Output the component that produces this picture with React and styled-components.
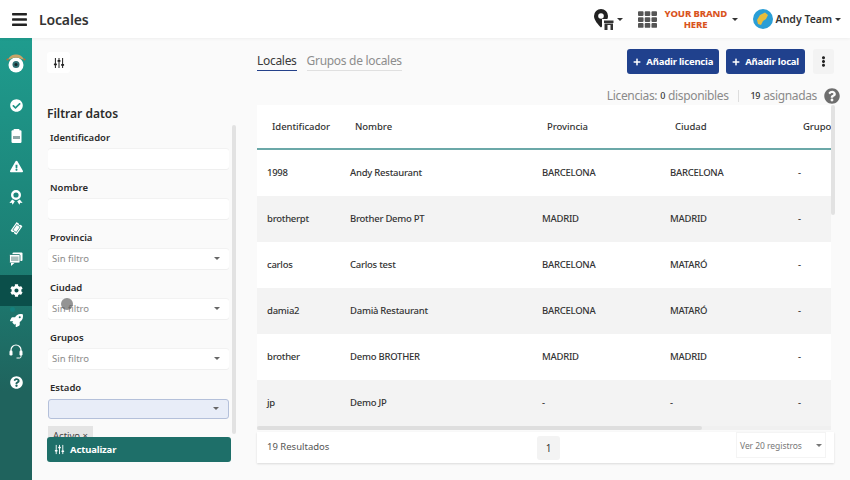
import React from "react"
import styled, { createGlobalStyle } from "styled-components"
import {
  FaBars,
  FaCheckCircle,
  FaExclamationTriangle,
  FaTicketAlt,
  FaCog,
  FaRocket,
  FaQuestionCircle,
  FaPlus,
  FaEllipsisV,
  FaTh,
} from "react-icons/fa"

const GlobalStyle = createGlobalStyle`
  html, body {
    margin: 0;
    padding: 0;
    background: #fafafa;
    font-family: "Noto Sans", "Open Sans", sans-serif;
    color: #333;
  }
  * { box-sizing: border-box; }
`

const Page = styled.div`
  position: relative;
  width: 850px;
  height: 480px;
  overflow: hidden;
  display: flex;
  flex-direction: column;
`

const Header = styled.header`
  height: 38px;
  flex: none;
  background: #fff;
  box-shadow: 0 1px 3px rgba(0, 0, 0, 0.05);
  display: flex;
  align-items: center;
  justify-content: space-between;
  padding: 0 9px 0 11px;
  z-index: 2;
`

const HeaderLeft = styled.div`
  display: flex;
  align-items: center;
  gap: 11px;
  color: #222;
  font-size: 17px;
`

const Title = styled.h1`
  margin: 0;
  font-size: 14px;
  font-weight: 600;
  letter-spacing: -0.15px;
  color: #333;
`

const HeaderRight = styled.div`
  display: flex;
  align-items: center;
`

const Caret = styled.span`
  display: inline-block;
  width: 0;
  height: 0;
  border-left: 3px solid transparent;
  border-right: 3px solid transparent;
  border-top: 3px solid ${({ color }) => color || "#333"};
`

const PinCaret = styled(Caret)`
  margin: 0 15px 0 3px;
`

const BrandCaret = styled(Caret)`
  margin-right: 15px;
`

const Brand = styled.div`
  width: 62px;
  margin: 0 5px 0 8px;
  text-align: center;
  font-size: 9.5px;
  line-height: 11px;
  font-weight: 800;
  letter-spacing: -0.1px;
  white-space: nowrap;
  color: #d9541e;
`

const UserName = styled.span`
  margin: 0 3px 0 3px;
  font-size: 10.5px;
  font-weight: 600;
  color: #333;
`

const Body = styled.div`
  flex: 1;
  min-height: 0;
  display: grid;
  grid-template-columns: 32px 213px 1fr;
`

const Sidebar = styled.nav`
  background: linear-gradient(#1f9c8e 0, #1c7f74 50%, #1f635d 80%);
  padding-top: 10px;
  display: flex;
  flex-direction: column;
`

const LogoSlot = styled.div`
  height: 30px;
  margin-bottom: 12px;
  display: flex;
  align-items: center;
  justify-content: center;
`

const NavItem = styled.div`
  position: relative;
  height: 30.8px;
  display: flex;
  align-items: center;
  justify-content: center;
  color: #fff;
  font-size: 13px;
  background: ${({ $active }) => ($active ? "#0b4f4a" : "transparent")};
`

const NavDot = styled.span`
  position: absolute;
  left: 10px;
  top: 1px;
  width: 5px;
  height: 5px;
  border-radius: 50%;
  background: #14807c;
`

const TicketGlyph = styled(FaTicketAlt)`
  font-size: 11px;
  transform: rotate(-55deg);
`

const FilterPanel = styled.aside`
  padding: 14px 9px 18px 15px;
  display: flex;
  flex-direction: column;
  min-height: 0;
`

const TuneButton = styled.div`
  width: 23px;
  height: 21px;
  background: #fff;
  border-radius: 3px;
  display: flex;
  align-items: center;
  justify-content: center;
  color: #222;
`

const FilterTitle = styled.h2`
  margin: 32px 0 0;
  font-size: 12px;
  line-height: 18px;
  font-weight: 600;
  color: #2b2b2b;
`

const FilterScroll = styled.div`
  flex: 1;
  min-height: 0;
  margin-top: 2px;
  display: flex;
  gap: 1px;
`

const FilterList = styled.div`
  flex: 1;
  min-width: 0;
  overflow: hidden;
  padding: 5.500px 2px 0 1px;
`

const ScrollTrack = styled.div`
  width: 4px;
  height: 309px;
  background: #e2e2e2;
  border-radius: 2px;
  flex: none;
`

const Field = styled.div`
  margin-bottom: 12px;
`

const FieldLabel = styled.label`
  display: block;
  height: 14px;
  margin: 0 0 4px 2px;
  font-size: 9.5px;
  line-height: 14px;
  font-weight: 600;
  color: #2b2b2b;
`

const Control = styled.div`
  height: 20px;
  padding: 0 9px 1px 4px;
  display: flex;
  align-items: center;
  justify-content: space-between;
  border-radius: 3px;
  font-size: 9.5px;
  color: #8b8b8b;
  background: ${({ $focused }) => ($focused ? "#e8edf8" : "#fff")};
  border: ${({ $focused }) => ($focused ? "1px solid #b4c0da" : "0")};
  box-shadow: ${({ $focused }) => ($focused ? "none" : "0 1px 0 #efefef, 0 -1px 0 #f2f2f2")};
`

const Chip = styled.span`
  display: block;
  width: fit-content;
  height: 20px;
  margin-top: -5px;
  padding: 3px 5px 0 5px;
  background: #e4e4e4;
  font-size: 9.5px;
  line-height: 14px;
  color: #444;
`

const UpdateButton = styled.button`
  flex: none;
  width: 184px;
  height: 25px;
  padding: 0 7px;
  display: flex;
  align-items: center;
  gap: 5px;
  border: 0;
  border-radius: 3px;
  background: #1e6f69;
  color: #fff;
  font-family: inherit;
  font-size: 9.5px;
  font-weight: 700;
  letter-spacing: -0.15px;
`

const Main = styled.main`
  padding: 11px 10px 0 12px;
  display: flex;
  flex-direction: column;
  min-width: 0;
`

const Toolbar = styled.div`
  height: 25px;
  margin-right: 6px;
  display: flex;
  align-items: center;
  justify-content: space-between;
`

const Tabs = styled.div`
  display: flex;
  gap: 10px;
`

const Tab = styled.span`
  padding-bottom: 1px;
  font-size: 12px;
  line-height: 17px;
  letter-spacing: -0.3px;
  color: ${({ $active }) => ($active ? "#3a3a3a" : "#8d8d8d")};
  border-bottom: 1px solid ${({ $active }) => ($active ? "#24418a" : "#e0e0e0")};
`

const Actions = styled.div`
  display: flex;
  align-items: center;
`

const PrimaryButton = styled.button`
  height: 25px;
  margin-right: 7px;
  padding: 0 6px;
  display: flex;
  align-items: center;
  gap: 5px;
  border: 0;
  border-radius: 3px;
  background: #20418d;
  color: #fff;
  font-family: inherit;
  font-size: 9.5px;
  font-weight: 700;
  letter-spacing: -0.2px;
  white-space: nowrap;
`

const MoreButton = styled.button`
  width: 21px;
  height: 25px;
  margin-left: 1px;
  padding: 0;
  display: flex;
  align-items: center;
  justify-content: center;
  border: 0;
  border-radius: 3px;
  background: #f3f3f3;
  color: #222;
  font-size: 11px;
`

const LicenseRow = styled.div`
  height: 31px;
  padding-top: 12px;
  display: flex;
  align-items: center;
  justify-content: flex-end;
  font-size: 12px;
  letter-spacing: -0.35px;
  color: #8a8a8a;
  white-space: nowrap;
`

const LicenseCount = styled.b`
  color: #333;
  font-size: 9px;
  font-weight: 500;
  margin: 0 3px;
`

const LicenseDivider = styled.span`
  width: 1px;
  height: 12px;
  margin: 0 9px;
  background: #ddd;
`

const HelpIcon = styled.span`
  display: flex;
  margin-left: 7px;
  color: #6e6e6e;
  font-size: 16px;
`

const TableArea = styled.div`
  height: 326px;
  margin-right: 5px;
  display: flex;
`

const TableViewport = styled.div`
  width: 574px;
  display: flex;
  flex-direction: column;
  overflow: hidden;
`

const Row = styled.div`
  flex: none;
  height: ${({ $head }) => ($head ? "45px" : "46px")};
  display: grid;
  grid-template-columns: 83px 192px 128px 128px 46px;
  align-items: center;
  white-space: nowrap;
  background: ${({ $shaded }) => ($shaded ? "#f3f3f3" : "#fff")};
  border-bottom: ${({ $head }) => ($head ? "2px solid #6ba8a8" : "0")};
`

const HeadCell = styled.div`
  padding-left: 15px;
  font-size: 9.5px;
  font-weight: 500;
  letter-spacing: -0.05px;
  color: #333;
  overflow: hidden;
`

const Cell = styled.div`
  padding: 0 0 2px 10px;
  font-size: 9.5px;
  font-weight: 500;
  letter-spacing: -0.25px;
  color: #333;
`

const HScroll = styled.div`
  flex: none;
  height: 4px;
  background: #f0f0f0;
`

const HThumb = styled.div`
  width: 445px;
  height: 4px;
  border-radius: 2px;
  background: #dedede;
`

const VScroll = styled.div`
  width: 4px;
  height: 110px;
  background: #e2e2e2;
  border-radius: 2px;
`

const TableFooter = styled.footer`
  width: 577px;
  height: 31px;
  margin-top: 1px;
  display: grid;
  grid-template-columns: 280px 1fr auto;
  align-items: center;
  background: #fff;
  box-shadow: 0 1px 2px rgba(0, 0, 0, 0.13);
`

const ResultCount = styled.span`
  padding: 0 0 2px 10px;
  font-size: 9.5px;
  color: #555;
`

const PageNumber = styled.span`
  width: 23px;
  height: 24px;
  display: flex;
  align-items: center;
  justify-content: center;
  background: #f3f3f3;
  border-radius: 3px;
  font-size: 10px;
  color: #333;
`

const PageSize = styled.div`
  width: 90px;
  height: 26px;
  margin: 0 8px 5px 0;
  padding: 0 3px 0 3px;
  display: flex;
  align-items: center;
  justify-content: space-between;
  border: 1px solid #f4f4f4;
  font-size: 8.5px;
  letter-spacing: -0.05px;
  color: #777;
`

const ClickMark = styled.span`
  position: absolute;
  left: 61px;
  top: 298px;
  width: 12px;
  height: 12px;
  border-radius: 50%;
  background: rgba(90, 90, 90, 0.65);
`

const TuneIcon = ({ size = 12 }) => (
  <svg width={size} height={size} viewBox="0 0 24 24" fill="currentColor">
    <rect x="3.800" y="2" width="2" height="20" />
    <rect x="11" y="2" width="2" height="20" />
    <rect x="18.200" y="2" width="2" height="20" />
    <rect x="1.800" y="13" width="6" height="3.500" rx="1" />
    <rect x="9" y="6" width="6" height="3.500" rx="1" />
    <rect x="16.200" y="14" width="6" height="3.500" rx="1" />
  </svg>
)

const EyeLogo = () => (
  <svg width="20" height="20" viewBox="0 0 20 20">
    <circle cx="10" cy="12" r="7.500" fill="#fff" />
    <circle cx="10" cy="11.500" r="3.500" fill="#2f6f73" />
    <circle cx="10" cy="11.500" r="1.500" fill="#16262a" />
    <path d="M2 6.500 C4 2.500 7 1.500 10 1.500 C13 1.500 16 2.500 18 6.500 L15.500 6 C13 4.200 7 4.200 4.500 6 Z" fill="#c9a468" />
    <circle cx="1.500" cy="6.500" r="1" fill="#c8642c" />
    <circle cx="18.500" cy="6.500" r="1" fill="#c8642c" />
  </svg>
)

const ClipboardIcon = () => (
  <svg width="11" height="14" viewBox="0 0 11 14">
    <rect x="2.500" y="0" width="6" height="2" rx="0.800" fill="#fff" />
    <rect x="0.500" y="1.200" width="10" height="12.800" rx="1.200" fill="#fff" />
    <rect x="2" y="7" width="7" height="3" fill="#8fa6a6" />
  </svg>
)

const RibbonIcon = () => (
  <svg width="14" height="15" viewBox="0 0 14 15" fill="#fff">
    <path d="M7 0a5 5 0 1 1 0 10A5 5 0 0 1 7 0zm0 2.400a2.600 2.600 0 1 0 0 5.200 2.600 2.600 0 0 0 0-5.200z" />
    <path d="M3.200 9.600 0.400 13l2.400-.2.800 2 2.200-3.600zM10.800 9.600 13.600 13l-2.400-.2-.8 2-2.200-3.600z" />
  </svg>
)

const ChatIcon = () => (
  <svg width="14" height="14" viewBox="0 0 14 14">
    <rect x="3.500" y="0.500" width="10" height="8.500" rx="1" fill="#fff" />
    <rect x="0.500" y="2.500" width="10.500" height="8.500" rx="1" fill="#fff" stroke="#1c7269" strokeWidth="0.800" />
    <rect x="2" y="4.500" width="7.500" height="4.500" fill="#a8bfbc" />
    <path d="M2 11 V14 L5.500 11 Z" fill="#fff" />
  </svg>
)

const HeadsetIcon = () => (
  <svg width="14" height="15" viewBox="0 0 14 15" fill="none">
    <path d="M2 8 V6 a5 5 0 0 1 10 0 V8" stroke="#fff" strokeWidth="1.200" />
    <rect x="0.500" y="6.500" width="3" height="5" rx="1.200" fill="#fff" />
    <rect x="10.500" y="6.500" width="3" height="5" rx="1.200" fill="#fff" />
    <path d="M12 11 V12.500 a1.500 1.500 0 0 1 -1.500 1.500 H7.500" stroke="#fff" strokeWidth="1" />
  </svg>
)

const StorePinIcon = () => (
  <svg width="20" height="21" viewBox="0 0 20 21">
    <path d="M7 0a7 7 0 0 1 7 7c0 4.400-4.400 8.800-7 11.500C4.400 15.800 0 11.400 0 7a7 7 0 0 1 7-7z" fill="#222" />
    <circle cx="7" cy="7" r="2.800" fill="#fff" />
    <rect x="8" y="10" width="12" height="11" fill="#fff" />
    <rect x="10" y="11.500" width="9.500" height="2.500" fill="#333" />
    <rect x="10.500" y="14.500" width="8.500" height="6.500" fill="#333" />
    <rect x="13.500" y="16" width="3" height="5" fill="#fff" />
  </svg>
)

const Avatar = () => (
  <svg width="20" height="20" viewBox="0 0 20 20">
    <circle cx="10" cy="10" r="10" fill="#2a9ed6" />
    <path d="M4 11 L7 6 L12 3.500 L15 6 L13 10 L10 12 L8 16 L5 15 Z" fill="#e8bd3c" />
  </svg>
)

const rows = [
  ["1998", "Andy Restaurant", "BARCELONA", "BARCELONA", "-"],
  ["brotherpt", "Brother Demo PT", "MADRID", "MADRID", "-"],
  ["carlos", "Carlos test", "BARCELONA", "MATARÓ", "-"],
  ["damia2", "Damià Restaurant", "BARCELONA", "MATARÓ", "-"],
  ["brother", "Demo BROTHER", "MADRID", "MADRID", "-"],
  ["jp", "Demo JP", "-", "-", "-"],
]

const columns = ["Identificador", "Nombre", "Provincia", "Ciudad", "Grupos"]

const filters = [
  { label: "Identificador" },
  { label: "Nombre" },
  { label: "Provincia", placeholder: "Sin filtro", select: true },
  { label: "Ciudad", placeholder: "Sin filtro", select: true },
  { label: "Grupos", placeholder: "Sin filtro", select: true },
  { label: "Estado", select: true, focused: true },
]

const App = () => {
  return (
    <Page>
      <GlobalStyle />
      <Header>
        <HeaderLeft>
          <FaBars />
          <Title>Locales</Title>
        </HeaderLeft>
        <HeaderRight>
          <StorePinIcon />
          <PinCaret />
          <FaTh size={19} color="#555" />
          <Brand>YOUR BRAND<br />HERE</Brand>
          <BrandCaret />
          <Avatar />
          <UserName>Andy Team</UserName>
          <Caret />
        </HeaderRight>
      </Header>
      <Body>
        <Sidebar>
          <LogoSlot>
            <EyeLogo />
          </LogoSlot>
          <NavItem><FaCheckCircle /></NavItem>
          <NavItem><ClipboardIcon /></NavItem>
          <NavItem><FaExclamationTriangle /></NavItem>
          <NavItem><RibbonIcon /></NavItem>
          <NavItem><TicketGlyph /></NavItem>
          <NavItem><ChatIcon /></NavItem>
          <NavItem $active><FaCog /></NavItem>
          <NavItem><NavDot /><FaRocket /></NavItem>
          <NavItem><HeadsetIcon /></NavItem>
          <NavItem><FaQuestionCircle /></NavItem>
        </Sidebar>
        <FilterPanel>
          <TuneButton><TuneIcon /></TuneButton>
          <FilterTitle>Filtrar datos</FilterTitle>
          <FilterScroll>
            <FilterList>
              {filters.map((f) => (
                <Field key={f.label}>
                  <FieldLabel>{f.label}</FieldLabel>
                  <Control $focused={f.focused}>
                    <span>{f.placeholder}</span>
                    {f.select && <Caret color="#666" />}
                  </Control>
                </Field>
              ))}
              <Chip>Activo ×</Chip>
            </FilterList>
            <ScrollTrack />
          </FilterScroll>
          <UpdateButton>
            <TuneIcon size={11} />
            Actualizar
          </UpdateButton>
        </FilterPanel>
        <Main>
          <Toolbar>
            <Tabs>
              <Tab $active>Locales</Tab>
              <Tab>Grupos de locales</Tab>
            </Tabs>
            <Actions>
              <PrimaryButton><FaPlus size={8} />Añadir licencia</PrimaryButton>
              <PrimaryButton><FaPlus size={8} />Añadir local</PrimaryButton>
              <MoreButton><FaEllipsisV /></MoreButton>
            </Actions>
          </Toolbar>
          <LicenseRow>
            Licencias:<LicenseCount>0</LicenseCount>disponibles
            <LicenseDivider />
            <LicenseCount>19</LicenseCount>asignadas
            <HelpIcon><FaQuestionCircle /></HelpIcon>
          </LicenseRow>
          <TableArea>
            <TableViewport>
              <Row $head>
                {columns.map((c) => <HeadCell key={c}>{c}</HeadCell>)}
              </Row>
              {rows.map((r, i) => (
                <Row key={r[0]} $shaded={i % 2 === 1}>
                  {r.map((v, j) => <Cell key={j}>{v}</Cell>)}
                </Row>
              ))}
              <HScroll><HThumb /></HScroll>
            </TableViewport>
            <VScroll />
          </TableArea>
          <TableFooter>
            <ResultCount>19 Resultados</ResultCount>
            <PageNumber>1</PageNumber>
            <PageSize>
              Ver 20 registros
              <Caret color="#777" />
            </PageSize>
          </TableFooter>
        </Main>
      </Body>
      <ClickMark />
    </Page>
  )
}

export default App
